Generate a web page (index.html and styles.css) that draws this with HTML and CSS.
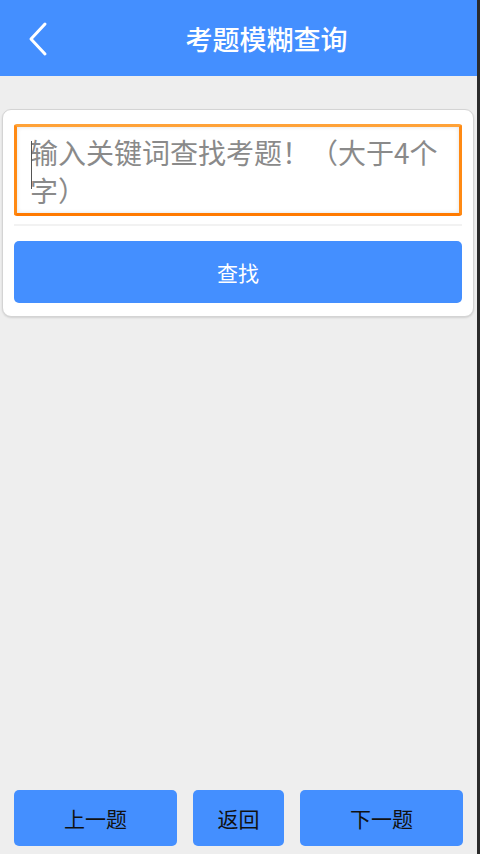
FILE: index.html
```html
<!DOCTYPE html>
<html lang="zh-CN">
<head>
    <meta charset="UTF-8">
    <meta name="viewport" content="width=device-width, initial-scale=1.0">
    <title>考题模糊查询</title>
    <link rel="stylesheet" href="styles.css">
</head>
<body>
    <div class="app">
        <div class="header">
            <a class="back" href="#">
                <svg width="22" height="36" viewBox="0 0 22 36">
                    <polyline points="17,3 3,18 17,33" fill="none" stroke="#fff" stroke-width="3" stroke-linecap="round" stroke-linejoin="round"/>
                </svg>
            </a>
            <h1>考题模糊查询</h1>
        </div>

        <div class="content">
            <div class="card">
                <div class="search-box">
                    <span class="cursor"></span>
                    <div class="placeholder">输入关键词查找考题！（大于4个字）</div>
                </div>
                <div class="divider"></div>
                <button class="btn-search">查找</button>
            </div>
        </div>

        <div class="footer">
            <button class="btn-nav wide">上一题</button>
            <button class="btn-nav">返回</button>
            <button class="btn-nav wide">下一题</button>
        </div>
    </div>
</body>
</html>
```

FILE: styles.css
```css
html, body {
    margin: 0;
    padding: 0;
    height: 100%;
}

body {
    font-family: "Noto Sans CJK SC", "Noto Sans", sans-serif;
    background-color: #2b2b2b;
}

.app {
    width: 477px;
    height: 854px;
    background-color: #eeeeee;
    display: flex;
    flex-direction: column;
}

.header {
    height: 76px;
    background-color: #448fff;
    display: flex;
    align-items: center;
}

.back {
    display: flex;
    margin-left: 28px;
    margin-top: 1px;
}

.header h1 {
    flex: 1;
    margin: 0;
    padding-left: 6px;
    text-align: center;
    color: #fff;
    font-size: 27px;
    font-weight: 500;
}

.content {
    flex: 1;
    padding: 33px 3px 0 2px;
}

.card {
    background-color: #fff;
    border: 1px solid #d4d4d4;
    border-radius: 9px;
    box-shadow: 0 1px 2px rgba(0, 0, 0, 0.12);
    padding: 14px 11px 13px 11px;
}

.search-box {
    position: relative;
    height: 92px;
    box-sizing: border-box;
    border: 3px solid #ff8a14;
    border-top-color: #ffa238;
    border-bottom-color: #ff7a00;
    border-radius: 3px;
    box-shadow: inset 0 0 4px rgba(0, 0, 0, 0.12);
    padding: 6px 14px 0 13px;
}

.placeholder {
    color: #8a8a8a;
    font-size: 28px;
    line-height: 38px;
}

.cursor {
    position: absolute;
    left: 14px;
    top: 14px;
    width: 1px;
    height: 48px;
    background-color: #555;
}

.divider {
    height: 2px;
    background-color: #f2f2f2;
    margin: 8px 0 15px;
}

.btn-search {
    display: block;
    width: 100%;
    height: 62px;
    border: none;
    border-radius: 5px;
    background-color: #448fff;
    color: #fff;
    font-family: inherit;
    font-size: 21px;
}

.footer {
    display: flex;
    gap: 16px;
    padding: 0 14px 8px 14px;
}

.btn-nav {
    flex: 1 1 0;
    height: 56px;
    padding: 0;
    border: none;
    border-radius: 5px;
    background-color: #448fff;
    color: #111;
    font-family: inherit;
    font-size: 21px;
}

.btn-nav.wide {
    flex: 1.79 1 0;
}
```
